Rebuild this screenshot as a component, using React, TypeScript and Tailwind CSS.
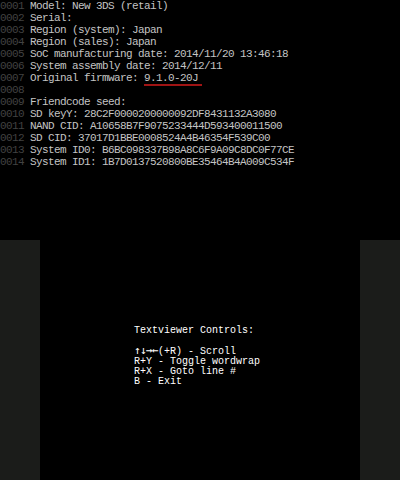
const lines: string[] = [
  "Model: New 3DS (retail)",
  "Serial:",
  "Region (system): Japan",
  "Region (sales): Japan",
  "SoC manufacturing date: 2014/11/20 13:46:18",
  "System assembly date: 2014/12/11",
  "Original firmware: ",
  "",
  "Friendcode seed:",
  "SD keyY: 28C2F0000200000092DF8431132A3080",
  "NAND CID: A10658B7F9075233444D593400011500",
  "SD CID: 37017D1BBE0008524A4B46354F539C00",
  "System ID0: B6BC098337B98A8C6F9A09C8DC0F77CE",
  "System ID1: 1B7D0137520800BE35464B4A009C534F",
];

const mono = "font-['Liberation_Mono','DejaVu_Sans_Mono',monospace]";

export default function App() {
  return (
    <div className={`w-[400px] h-[480px] bg-black flex flex-col ${mono}`}>
      {/* top screen */}
      <div className="h-[240px] text-[11px] leading-[12px] tracking-[-0.6px] whitespace-pre">
        {lines.map((text, i) => (
          <div key={i} className="h-[12px]">
            <span className="text-[#424242]">{String(i + 1).padStart(4, "0")} </span>
            <span className="text-[#c4c4c4]">{text}</span>
            {i === 6 && (
              <span className="text-[#c4c4c4] border-b-2 border-[#a01414] pr-[4px]">9.1.0-20J</span>
            )}
          </div>
        ))}
      </div>

      {/* bottom screen */}
      <div className="h-[240px] flex">
        <div className="w-[40px] bg-[#1b1c1a]" />
        <div className="w-[320px] bg-black pt-[86px] pl-[94px] text-white text-[10px] leading-[10px] whitespace-pre">
          <div>Textviewer Controls:</div>
          <div>&nbsp;</div>
          <div>
            <span className="font-['DejaVu_Sans_Mono',monospace] text-[11px] leading-[10px] tracking-[-0.62px]">↑↓→←</span>(+R) - Scroll
          </div>
          <div>R+Y - Toggle wordwrap</div>
          <div>R+X - Goto line #</div>
          <div>B - Exit</div>
        </div>
        <div className="w-[40px] bg-[#1b1c1a]" />
      </div>
    </div>
  );
}
